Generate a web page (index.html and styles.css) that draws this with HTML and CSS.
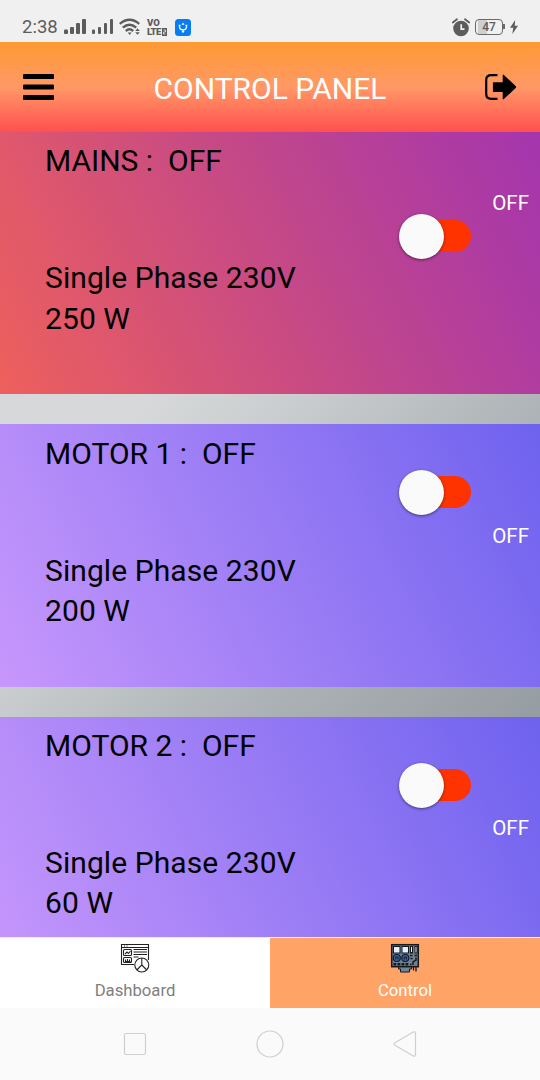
FILE: index.html
```
<!DOCTYPE html>
<html lang="en">

<head>
  <meta charset="UTF-8">
  <meta name="viewport" content="width=device-width, initial-scale=1.0">
  <title>Control Panel</title>
  <link rel="stylesheet" href="styles.css">
</head>

<body>
  <div class="status">
    <span class="clock">2:38</span>
    <svg class="signals" width="50" height="16" viewBox="0 0 50 16" fill="#5c5c5c">
      <rect x="0" y="10.5" width="4" height="4.5" rx="1" />
      <rect x="6" y="8" width="4" height="7" rx="1" />
      <rect x="12" y="4" width="4" height="11" rx="1" />
      <rect x="18" y="0" width="4" height="15" rx="1" />
      <rect x="28" y="10.5" width="3" height="4.5" rx="1" />
      <rect x="34" y="8" width="3" height="7" rx="1" />
      <rect x="40" y="4" width="3" height="11" rx="1" />
      <rect x="46" y="0" width="3" height="15" rx="1" />
    </svg>
    <svg class="wifi" width="22" height="18" viewBox="0 0 22 18" fill="none" stroke="#5c5c5c" stroke-width="2.4">
      <path d="M.8 5.800Q10.500-2.400 20.200 5.800M3.800 9.600Q10.500 3.800 17.200 9.600M6.800 13Q10.500 9.700 14.200 13" />
      <path d="M8.800 14.600h3.800l-1.900 2.400zM16.200 13l2.300-2.800 2.300 2.800zM16.200 14.200h4.600l-2.300 2.600z" fill="#5c5c5c" stroke="none" />
    </svg>
    <div class="volte">
      <span>VO</span>
      <span class="lte">LTE
        <svg width="5" height="8" viewBox="0 0 5 8"><rect width="5" height="8" fill="#5c5c5c" /><path d="M1.500 2h2v2h-2v2h2" fill="none" stroke="#f0f0f0" stroke-width=".8" /></svg>
      </span>
    </div>
    <svg class="usb" width="16" height="17" viewBox="0 0 16 17">
      <rect width="16" height="17" rx="3.5" fill="#087cf5" />
      <path d="M4.500 7.500q0 3.300 3.500 3.300t3.500-3.300" fill="none" stroke="#fff" stroke-width="1.2" />
      <path d="M6.500 5.800L8 3.500l1.500 2.300zM3.700 5.800h1.800v1.800H3.700zM10.500 5.800h1.800v1.800h-1.800z" fill="#fff" />
      <circle cx="8" cy="12.500" r="1.200" fill="#fff" />
    </svg>
    <svg class="alarm" width="18" height="19" viewBox="0 0 18 19">
      <circle cx="9" cy="10.5" r="7.8" fill="#5c5c5c" />
      <path d="M.8 4.500L5 1.200M17.200 4.500L13 1.200" stroke="#5c5c5c" stroke-width="1.8" stroke-linecap="round" />
      <path d="M9.200 6.200v5h3.300" fill="none" stroke="#f0f0f0" stroke-width="1.700" />
    </svg>
    <div class="battery">47</div>
    <svg class="bolt" width="8" height="14" viewBox="0 0 8 14">
      <path d="M5.200 0L0 7.700h3.200L2.400 14 8 5.800H4.700z" fill="#5c5c5c" />
    </svg>
  </div>

  <div class="header">
    <svg width="31" height="26" viewBox="0 0 31 26">
      <rect width="31" height="5" rx="1" />
      <rect y="10.5" width="31" height="5" rx="1" />
      <rect y="21" width="31" height="5" rx="1" />
    </svg>
    <h1>CONTROL PANEL</h1>
    <svg width="32" height="26" viewBox="0 0 32 26">
      <path d="M12.500 1.200H6.300Q1.200 1.200 1.200 6v14q0 4.800 5.100 4.800h6.200" fill="none" stroke="#000" stroke-width="2.200" />
      <path d="M8.500 8.200h9.200V1.300q0-1.300 1.200-.4l11.800 11.200q1 .9 0 1.800L18.900 25.100q-1.200.9-1.200-.4V18H8.500q-.6 0-.6-.6V8.800q0-.6.600-.6z" />
    </svg>
  </div>

  <div class="list">
    <div class="card mains">
      <div class="info">
        <p>MAINS :&nbsp; OFF</p>
        <p class="rating">Single Phase 230V<br>250 W</p>
      </div>
      <div class="control">
        <span class="state">OFF</span>
        <div class="switch"><div class="knob"></div></div>
      </div>
    </div>
    <div class="card motor">
      <div class="info">
        <p>MOTOR 1 :&nbsp; OFF</p>
        <p class="rating">Single Phase 230V<br>200 W</p>
      </div>
      <div class="control">
        <div class="switch"><div class="knob"></div></div>
        <span class="state">OFF</span>
      </div>
    </div>
    <div class="card motor last">
      <div class="info">
        <p>MOTOR 2 :&nbsp; OFF</p>
        <p class="rating">Single Phase 230V<br>60 W</p>
      </div>
      <div class="control">
        <div class="switch"><div class="knob"></div></div>
        <span class="state">OFF</span>
      </div>
    </div>
  </div>

  <div class="tabs">
    <div class="tab">
      <svg width="30" height="30" viewBox="0 0 30 30" fill="none" stroke="#222" stroke-width="1.1">
        <path d="M14 21.500H1.500v-20h27V17M1.500 4.500h27M4 3h1M6.500 3h1" />
        <rect x="3.500" y="6.500" width="8" height="6" rx="1" />
        <rect x="3.500" y="14.500" width="8" height="5" rx="1" />
        <path d="M5 11l2-2 1.500 1.500 2-2.500M5.500 18.500v-2M7.500 18.500v-2.500M9.500 18.500v-2M5 18.500h5.500" />
        <path d="M13.500 6.500h13.500M13.500 9h13.500M13.500 11.500h13.500M13.500 14h5" />
        <circle cx="21.800" cy="22" r="7" fill="#fff" />
        <path d="M21.800 15v7l-5 5M21.800 22l5 5" />
      </svg>
      <span>Dashboard</span>
    </div>
    <div class="tab active">
      <svg width="30" height="30" viewBox="0 0 30 30">
        <path d="M8.500 23.500h13v2.500h-2v3h-9v-3h-2z" fill="#6f8796" stroke="#15191d" />
        <path d="M23.500 23v4.500M26 23v5.500" stroke="#15191d" stroke-width="1.300" />
        <rect x="1.700" y="1.700" width="26.600" height="22" fill="#71808c" stroke="#15191d" stroke-width="1.500" />
        <g fill="#e2f0ff" stroke="#15191d">
          <rect x="3.500" y="3.500" width="6.500" height="6.500" />
          <rect x="12" y="3.500" width="6.500" height="6.500" />
          <rect x="20.500" y="3.500" width="2" height="6.500" />
          <rect x="25" y="3.500" width="2" height="6.500" />
        </g>
        <g fill="#3a669f" stroke="#10192c" stroke-width="1.200">
          <circle cx="6.800" cy="15" r="3.500" />
          <circle cx="15.300" cy="15" r="3.500" />
        </g>
        <path d="M5.800 16.500v-2.500h2.200v2.500M14.200 16.500v-2.500h2.200v2.500" fill="none" stroke="#10192c" />
        <path d="M3.500 21.200h15" stroke="#15191d" stroke-width="2.600" stroke-dasharray="2.800 1.200" />
        <path d="M20 12.500h2.500M24.500 12.500h2.500M26 14.500v2.500l-3 2v3M20.500 15.500h2M20 21.500h1.500" fill="none" stroke="#15191d" stroke-width="1.500" />
      </svg>
      <span>Control</span>
    </div>
  </div>

  <div class="nav">
    <svg width="24" height="24" viewBox="0 0 24 24"><rect x="1.500" y="1.500" width="21" height="21" rx="1.500" /></svg>
    <svg width="28" height="28" viewBox="0 0 28 28"><circle cx="14" cy="14" r="13" /></svg>
    <svg width="24" height="28" viewBox="0 0 24 28"><path d="M20.300 2.100Q22.500 1 22.500 3.400v21.200q0 2.400-2.200 1.300L1.900 15.300Q0 14 1.900 12.700z" /></svg>
  </div>
</body>

</html>
```
FILE: styles.css
```
* {
  box-sizing: border-box;
}

body {
  margin: 0;
  width: 540px;
  height: 1080px;
  display: flex;
  flex-direction: column;
  overflow: hidden;
  font-family: Roboto, "Liberation Sans", sans-serif;
}

svg {
  display: block;
  flex-shrink: 0;
}

.status {
  height: 42px;
  padding: 12px 22px 0 22px;
  display: flex;
  align-items: center;
  background-color: #f0f0f0;
  color: #5c5c5c;
}

.clock {
  width: 42px;
  font-size: 18.5px;
}

.wifi {
  margin-left: 5px;
}

.volte {
  width: 23px;
  margin-left: 6px;
  font-size: 9.5px;
  font-weight: 900;
  line-height: 9px;
}

.volte span {
  display: block;
}

.volte .lte {
  display: flex;
  align-items: center;
  font-size: 9.5px;
  letter-spacing: -0.6px;
  gap: 1px;
}

.usb {
  margin-left: 5px;
}

.alarm {
  margin-left: auto;
}

.battery {
  position: relative;
  width: 28px;
  height: 16px;
  margin: 0 7px 0 5px;
  border: 1.5px solid #6a6a6a;
  border-radius: 4px;
  background: linear-gradient(to right, transparent 2px, #cfcfcf 2px, #cfcfcf 11px, transparent 11px);
  font-size: 12px;
  font-weight: 500;
  line-height: 14px;
  text-align: center;
}

.battery::after {
  content: "";
  position: absolute;
  top: 4px;
  right: -3px;
  width: 2px;
  height: 5px;
  background-color: #6a6a6a;
}

.header {
  height: 90px;
  padding: 0 23px;
  display: flex;
  align-items: center;
  justify-content: space-between;
  background: linear-gradient(#ff9933, #ff9966 50%, #ff5050);
}

.header h1 {
  margin: 2px 0 0 1px;
  color: #fff;
  font-size: 30px;
  font-weight: 400;
}

.list {
  height: 805px;
  display: flex;
  flex-direction: column;
  gap: 30px;
  overflow: hidden;
  background: linear-gradient(135deg, #d6d8d9 31%, #cacdcf 42%, #adb3b6 61%, #979ea3 82.5%);
}

.card {
  height: 263px;
  flex-shrink: 0;
  display: flex;
  justify-content: space-between;
}

.mains {
  height: 262px;
  background: linear-gradient(64deg, #ee605c, #c0468c 58%, #a435ae);
}

.motor {
  background: linear-gradient(64deg, #c797fc, #6e62ee);
}

.info {
  padding: 9px 0 0 45px;
  font-size: 30px;
  line-height: 40.5px;
}

.motor .info {
  padding-top: 9.5px;
}

.info p {
  margin: 0 0 76.5px;
}

.info .rating {
  letter-spacing: 0.08px;
}

.control {
  width: 141px;
  display: flex;
  flex-direction: column;
}

.state {
  align-self: flex-end;
  margin-right: 11px;
  color: #fff;
  font-size: 20.5px;
  line-height: 24px;
}

.switch {
  width: 70px;
  height: 32px;
  margin-left: 2px;
  display: flex;
  align-items: center;
  border-radius: 16px;
  background-color: #ff3300;
}

.knob {
  width: 45px;
  height: 45px;
  margin-left: -2px;
  flex-shrink: 0;
  border-radius: 50%;
  background-color: #fafafa;
  box-shadow: 0 1px 3px rgba(0, 0, 0, 0.5);
}

.mains .control {
  padding-top: 59px;
  gap: 5px;
}

.motor .control {
  padding-top: 52px;
  gap: 16px;
}

.last .info {
  padding-top: 8.5px;
}

.last .control {
  gap: 15px;
}

.tabs {
  height: 71px;
  display: flex;
  border-top: 1px solid #f3e9ee;
}

.tab {
  flex: 1;
  padding-top: 5px;
  display: flex;
  flex-direction: column;
  align-items: center;
  gap: 8px;
  color: #808080;
  font-size: 16.7px;
  line-height: 20px;
  background-color: #fff;
}

.tab.active {
  color: #fff;
  background-color: #ffa366;
}

.nav {
  height: 72px;
  padding: 0 68px;
  display: grid;
  grid-template-columns: repeat(3, 1fr);
  place-items: center;
  background-color: #fafafa;
}

.nav svg {
  fill: none;
  stroke: #cfcfcf;
  stroke-width: 1.2;
}
```
